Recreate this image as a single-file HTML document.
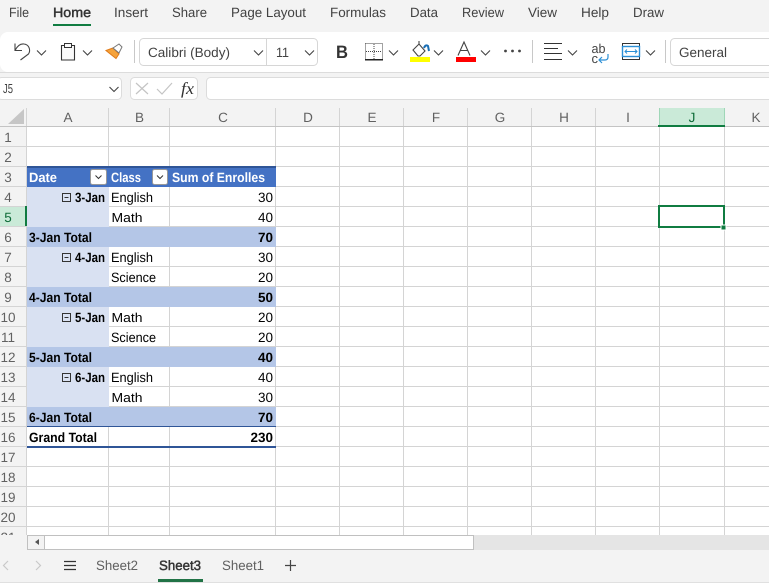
<!DOCTYPE html>
<html><head><meta charset="utf-8"><title>Excel</title>
<style>
html,body{margin:0;padding:0;background:#fff;width:769px;height:587px;overflow:hidden}
svg{display:block}
text{font-family:"Liberation Sans",sans-serif;text-rendering:geometricPrecision}
.tab{font-size:13.5px;fill:#424242}
.rh{font-size:13.5px;fill:#616161;text-anchor:middle}
.ch{font-size:13.5px;fill:#616161;text-anchor:middle}
.c{font-size:13.5px;fill:#000}
.m{font-size:13px;fill:#000}
.b{font-size:13.5px;fill:#000;font-weight:bold}
.w{font-size:13.5px;fill:#fff;font-weight:bold}
.chev{fill:none;stroke:#444;stroke-width:1.1}
</style></head><body>
<svg width="769" height="587" viewBox="0 0 769 587" xmlns="http://www.w3.org/2000/svg">
<rect width="769" height="587" fill="#f3f3f3"/>

<!-- tabs -->
<g class="tab">
<text x="9" y="17" textLength="20" lengthAdjust="spacingAndGlyphs">File</text>
<text x="53" y="17" textLength="38" lengthAdjust="spacingAndGlyphs" style="fill:#333;stroke:#333;stroke-width:.45">Home</text>
<text x="114" y="17" textLength="34" lengthAdjust="spacingAndGlyphs">Insert</text>
<text x="172" y="17" textLength="35" lengthAdjust="spacingAndGlyphs">Share</text>
<text x="231" y="17" textLength="75" lengthAdjust="spacingAndGlyphs">Page Layout</text>
<text x="330" y="17" textLength="56" lengthAdjust="spacingAndGlyphs">Formulas</text>
<text x="410" y="17" textLength="28" lengthAdjust="spacingAndGlyphs">Data</text>
<text x="462" y="17" textLength="42" lengthAdjust="spacingAndGlyphs">Review</text>
<text x="528" y="17" textLength="29" lengthAdjust="spacingAndGlyphs">View</text>
<text x="581" y="17" textLength="28" lengthAdjust="spacingAndGlyphs">Help</text>
<text x="633" y="17" textLength="31" lengthAdjust="spacingAndGlyphs">Draw</text>
</g>
<rect x="53" y="24" width="38" height="2" fill="#107c41"/>

<!-- toolbar -->
<rect x="0" y="72" width="769" height="1" fill="#dcdcdc"/>
<path d="M0 40a8 8 0 0 1 8-8H769V72H8a8 8 0 0 1-8-8z" fill="#fff"/>
<!-- undo -->
<path d="M15 43.500v7h7M15 50.500c2-4 5-7 9-6.500 5 .5 7 6 4.500 10l-8 6" fill="none" stroke="#444" stroke-width="1.100"/>
<path class="chev" d="M37 50.500l4.500 4.500 4.500-4.500"/>
<!-- clipboard -->
<path d="M64 45.500h-2.500v14.500h13v-14.500H72" fill="#fafafa" stroke="#333" stroke-width="1.100"/>
<rect x="64.500" y="43.500" width="7" height="4" fill="#fafafa" stroke="#333" stroke-width="1"/>
<path class="chev" d="M83 50.500l4.500 4.500 4.500-4.500"/>
<!-- format painter -->
<path d="M106 50.500l7-2.500 6 6-3 4.500z" fill="#f5a33c" stroke="#e07b1a" stroke-width="1"/>
<path d="M113 48l6-4 3 3-3 6z" fill="#fff" stroke="#777" stroke-width="1"/>
<rect x="134" y="40" width="1" height="23" fill="#c8c8c8"/>
<!-- font box -->
<rect x="139.500" y="38.500" width="178" height="27" rx="4" fill="#fff" stroke="#d6d6d6"/>
<rect x="266" y="39" width="1" height="26" fill="#d6d6d6"/>
<text x="148" y="57" font-size="13.500" fill="#424242" textLength="82" lengthAdjust="spacingAndGlyphs">Calibri (Body)</text>
<path class="chev" d="M254 50.500l4.500 4.500 4.500-4.500"/>
<text x="276" y="57" font-size="13.500" fill="#424242" textLength="13" lengthAdjust="spacingAndGlyphs">11</text>
<path class="chev" d="M305 50.500l4.500 4.500 4.500-4.500"/>
<!-- bold -->
<text x="336" y="58" font-size="18" font-weight="bold" fill="#333" textLength="12" lengthAdjust="spacingAndGlyphs">B</text>
<!-- borders -->
<path d="M365.500 43.500h17v16M365.500 43.500v16M374 44v15M366 51.500h16" fill="none" stroke="#444" stroke-width="1" stroke-dasharray="1 1"/>
<rect x="365" y="59" width="18" height="1.500" fill="#222"/>
<path class="chev" d="M389 50.500l4.500 4.500 4.500-4.500"/>
<!-- fill -->
<path d="M413 50l6-6 6 7-5 5h-2z" fill="#fff" stroke="#444" stroke-width="1.100"/>
<path d="M419 44v-3" stroke="#444" stroke-width="1.100"/>
<path d="M424 48c1-3 3-3 4-2l1 5" fill="none" stroke="#1a6fb5" stroke-width="2"/>
<rect x="410" y="57" width="20" height="5" fill="#ffff00"/>
<path class="chev" d="M434 50.500l4.500 4.500 4.500-4.500"/>
<!-- font color -->
<path d="M458 55.500l6-13.500 6 13.500M460 50.500h8" fill="none" stroke="#444" stroke-width="1.100"/>
<rect x="456" y="57" width="20" height="5" fill="#ff0000"/>
<path class="chev" d="M481 50.500l4.500 4.500 4.500-4.500"/>
<!-- dots -->
<circle cx="505.500" cy="51" r="1.400" fill="#444"/><circle cx="512.500" cy="51" r="1.400" fill="#444"/><circle cx="519.500" cy="51" r="1.400" fill="#444"/>
<rect x="532" y="40" width="1" height="23" fill="#c8c8c8"/>
<!-- align -->
<path d="M544 43.500h18M544 48.500h14M544 53.500h18M544 59.500h18" stroke="#333" stroke-width="1.100" fill="none"/>
<path class="chev" d="M568 50.500l4.500 4.500 4.500-4.500"/>
<!-- wrap -->
<text x="591.500" y="53" font-size="13" fill="#444" textLength="14" lengthAdjust="spacingAndGlyphs">ab</text>
<text x="591.500" y="63" font-size="13" fill="#444">c</text>
<path d="M608 54v3c0 2-1 3-3 3h-6M602 57l-3 3 3 3" fill="none" stroke="#2b8fd6" stroke-width="1.200"/>
<!-- merge -->
<rect x="622.500" y="43.500" width="17" height="16" fill="#fff" stroke="#333"/>
<rect x="622.500" y="46.500" width="17" height="10" fill="#fff" stroke="#2b8fd6" stroke-width="1.400"/>
<path d="M625 51.500h12M627 49.500l-2 2 2 2M635 49.500l2 2-2 2" fill="none" stroke="#2b8fd6"/>
<path class="chev" d="M646 50.500l4.500 4.500 4.500-4.500"/>
<rect x="665" y="40" width="1" height="23" fill="#c8c8c8"/>
<rect x="670.500" y="38.500" width="110" height="27" rx="4" fill="#fff" stroke="#d6d6d6"/>
<text x="679" y="57" font-size="13.500" fill="#424242" textLength="48" lengthAdjust="spacingAndGlyphs">General</text>

<!-- formula bar -->
<rect x="-2.500" y="77.500" width="124" height="22" rx="4" fill="#fff" stroke="#dcdcdc"/>
<text x="3" y="93" font-size="13" fill="#424242" textLength="10" lengthAdjust="spacingAndGlyphs">J5</text>
<path class="chev" d="M109.500 87l4.500 4.500 4.500-4.500"/>
<rect x="130.500" y="77.500" width="67" height="22" rx="4" fill="#fff" stroke="#dcdcdc"/>
<path d="M136 83l12 11M148 83l-12 11" stroke="#c4c4c4" stroke-width="1.200"/>
<path d="M157 89l5 5 10-11" fill="none" stroke="#c4c4c4" stroke-width="1.200"/>
<text x="181" y="94" font-style="italic" font-size="17" fill="#333" style="font-family:'Liberation Serif',serif" textLength="13" lengthAdjust="spacingAndGlyphs">fx</text>
<rect x="206.500" y="77.500" width="600" height="22" rx="4" fill="#fff" stroke="#dcdcdc"/>

<!-- sheet -->
<rect x="27" y="127" width="742" height="408" fill="#fff"/>
<rect x="659" y="108" width="65" height="18" fill="#caead8"/>
<rect x="0" y="206" width="26" height="20" fill="#caead8"/>
<path d="M8 124L24 109V124z" fill="#c6c6c6"/>

<!-- column header separators -->
<path d="M26.500 108v19M108.500 108v18M169.500 108v18M275.500 108v18M339.500 108v18M403.500 108v18M467.500 108v18M531.500 108v18M595.500 108v18" stroke="#d4d4d4" fill="none"/>
<path d="M659.500 108v18M724.500 108v18" stroke="#9fd6b7" fill="none"/>
<rect x="0" y="126" width="769" height="1" fill="#c4c4c4"/>
<rect x="658" y="125" width="67" height="2" fill="#107c41"/>

<!-- grid -->
<path shape-rendering="crispEdges" fill="none" stroke="#d4d4d4" d="M26.500 127V535M108.500 127V535M169.500 127V535M275.500 127V535M339.500 127V535M403.500 127V535M467.500 127V535M531.500 127V535M595.500 127V535M659.500 127V535M724.500 127V535
M0 146.500H769M0 166.500H769M0 186.500H769M0 206.500H769M0 226.500H769M0 246.500H769M0 266.500H769M0 286.500H769M0 306.500H769M0 326.500H769M0 346.500H769M0 366.500H769M0 386.500H769M0 406.500H769M0 426.500H769M0 446.500H769M0 466.500H769M0 486.500H769M0 506.500H769M0 526.500H769"/>

<!-- col letters -->
<g class="ch">
<text x="68" y="122">A</text><text x="139.500" y="122">B</text><text x="223" y="122">C</text><text x="308" y="122">D</text><text x="372" y="122">E</text><text x="436" y="122">F</text><text x="500" y="122">G</text><text x="564" y="122">H</text><text x="628" y="122">I</text><text x="692" y="122" style="fill:#0e6b38">J</text><text x="756" y="122">K</text>
</g>

<!-- pivot fills -->
<rect x="27" y="167" width="249" height="20" fill="#4472c4"/>
<rect x="27" y="166" width="249" height="2" fill="#2f5597"/>
<rect x="27" y="187" width="82" height="40" fill="#d9e1f2"/>
<rect x="27" y="247" width="82" height="40" fill="#d9e1f2"/>
<rect x="27" y="307" width="82" height="40" fill="#d9e1f2"/>
<rect x="27" y="367" width="82" height="40" fill="#d9e1f2"/>
<rect x="27" y="227" width="249" height="20" fill="#b4c6e7"/>
<rect x="27" y="287" width="249" height="20" fill="#b4c6e7"/>
<rect x="27" y="347" width="249" height="20" fill="#b4c6e7"/>
<rect x="27" y="407" width="249" height="20" fill="#b4c6e7"/>
<rect x="27" y="426" width="249" height="1" fill="#2f5597"/>
<rect x="27" y="446" width="249" height="2" fill="#2f5597"/>

<!-- pivot header -->
<text class="w" x="29" y="182" textLength="28" lengthAdjust="spacingAndGlyphs">Date</text>
<text class="w" x="111" y="182" textLength="30" lengthAdjust="spacingAndGlyphs">Class</text>
<text class="w" x="172" y="182" textLength="93" lengthAdjust="spacingAndGlyphs">Sum of Enrolles</text>
<rect x="90.500" y="169.500" width="16" height="15" rx="2" fill="#fff" stroke="#999"/>
<path d="M95.500 175.500l3 3 3-3" fill="none" stroke="#333"/>
<rect x="152.500" y="169.500" width="15" height="15" rx="2" fill="#fff" stroke="#999"/>
<path d="M157 175.500l3 3 3-3" fill="none" stroke="#333"/>

<!-- pivot rows -->
<g fill="none" stroke="#333">
<path d="M62.500 193.500h8v8h-8zM64.500 197.500h4"/>
<path d="M62.500 253.500h8v8h-8zM64.500 257.500h4"/>
<path d="M62.500 313.500h8v8h-8zM64.500 317.500h4"/>
<path d="M62.500 373.500h8v8h-8zM64.500 377.500h4"/>
</g>
<text class="b" x="75" y="202" textLength="30" lengthAdjust="spacingAndGlyphs">3-Jan</text>
<text class="b" x="75" y="262" textLength="30" lengthAdjust="spacingAndGlyphs">4-Jan</text>
<text class="b" x="75" y="322" textLength="30" lengthAdjust="spacingAndGlyphs">5-Jan</text>
<text class="b" x="75" y="382" textLength="30" lengthAdjust="spacingAndGlyphs">6-Jan</text>
<text class="c" x="111" y="202" textLength="42" lengthAdjust="spacingAndGlyphs">English</text>
<text class="m" x="111.500" y="222" textLength="31" lengthAdjust="spacingAndGlyphs">Math</text>
<text class="c" x="111" y="262" textLength="42" lengthAdjust="spacingAndGlyphs">English</text>
<text class="c" x="111" y="282" textLength="45" lengthAdjust="spacingAndGlyphs">Science</text>
<text class="m" x="111.500" y="322" textLength="31" lengthAdjust="spacingAndGlyphs">Math</text>
<text class="c" x="111" y="342" textLength="45" lengthAdjust="spacingAndGlyphs">Science</text>
<text class="c" x="111" y="382" textLength="42" lengthAdjust="spacingAndGlyphs">English</text>
<text class="m" x="111.500" y="402" textLength="31" lengthAdjust="spacingAndGlyphs">Math</text>
<g class="c" text-anchor="end">
<text x="273" y="202">30</text><text x="273" y="222">40</text><text x="273" y="262">30</text><text x="273" y="282">20</text><text x="273" y="322">20</text><text x="273" y="342">20</text><text x="273" y="382">40</text><text x="273" y="402">30</text>
</g>
<g class="b" text-anchor="end">
<text x="273" y="242">70</text><text x="273" y="302">50</text><text x="273" y="362">40</text><text x="273" y="422">70</text><text x="273" y="442">230</text>
</g>
<text class="b" x="29" y="242" textLength="63" lengthAdjust="spacingAndGlyphs">3-Jan Total</text>
<text class="b" x="29" y="302" textLength="63" lengthAdjust="spacingAndGlyphs">4-Jan Total</text>
<text class="b" x="29" y="362" textLength="63" lengthAdjust="spacingAndGlyphs">5-Jan Total</text>
<text class="b" x="29" y="422" textLength="63" lengthAdjust="spacingAndGlyphs">6-Jan Total</text>
<text class="b" x="29" y="442" textLength="68" lengthAdjust="spacingAndGlyphs">Grand Total</text>

<!-- row numbers -->
<g class="rh">
<text x="8" y="142">1</text><text x="8" y="162">2</text><text x="8" y="182">3</text><text x="8" y="202">4</text><text x="8" y="222" style="fill:#0e6b38">5</text><text x="8" y="242">6</text><text x="8" y="262">7</text><text x="8" y="282">8</text><text x="8" y="302">9</text><text x="8" y="322">10</text><text x="8" y="342">11</text><text x="8" y="362">12</text><text x="8" y="382">13</text><text x="8" y="402">14</text><text x="8" y="422">15</text><text x="8" y="442">16</text><text x="8" y="462">17</text><text x="8" y="482">18</text><text x="8" y="502">19</text><text x="8" y="522">20</text><text x="8" y="542">21</text>
</g>
<rect x="25" y="206" width="2" height="20" fill="#107c41"/>

<!-- selection -->
<rect x="659" y="206" width="65" height="21" fill="none" stroke="#107c41" stroke-width="2"/>
<rect x="721" y="225" width="5" height="5" fill="#107c41" stroke="#fff" stroke-width="1"/>

<!-- scrollbar + tabs -->
<rect x="0" y="535" width="769" height="47" fill="#f3f3f3"/>
<rect x="474" y="535" width="295" height="15" fill="#e5e5e5"/>
<rect x="27.500" y="535.500" width="446" height="14" fill="#fff" stroke="#c0c0c0"/>
<rect x="28" y="536" width="16" height="13" fill="#f3f3f3"/>
<rect x="44" y="536" width="1" height="13" fill="#c0c0c0"/>
<path d="M39 539v6l-4-3z" fill="#555"/>
<path d="M8 561l-4.500 4.500 4.500 4.500" fill="none" stroke="#c8c8c8" stroke-width="1.200"/>
<path d="M36 561l4.500 4.500-4.500 4.500" fill="none" stroke="#c8c8c8" stroke-width="1.200"/>
<path d="M64 561.500h12M64 565.500h12M64 569.500h12" stroke="#333" stroke-width="1.200" fill="none"/>
<text x="96" y="570" font-size="13.500" fill="#616161" textLength="42" lengthAdjust="spacingAndGlyphs">Sheet2</text>
<text x="159" y="570" font-size="13.500" fill="#333" stroke="#333" stroke-width=".45" textLength="42" lengthAdjust="spacingAndGlyphs">Sheet3</text>
<text x="222" y="570" font-size="13.500" fill="#616161" textLength="42" lengthAdjust="spacingAndGlyphs">Sheet1</text>
<path d="M285 565.500h11M290.500 560v11" stroke="#444" stroke-width="1.200" fill="none"/>
<rect x="158" y="579" width="45" height="3" fill="#217346"/>
<rect x="0" y="582" width="769" height="1" fill="#e0e0e0"/>
<rect x="0" y="583" width="769" height="4" fill="#fff"/>
</svg>
</body></html>
